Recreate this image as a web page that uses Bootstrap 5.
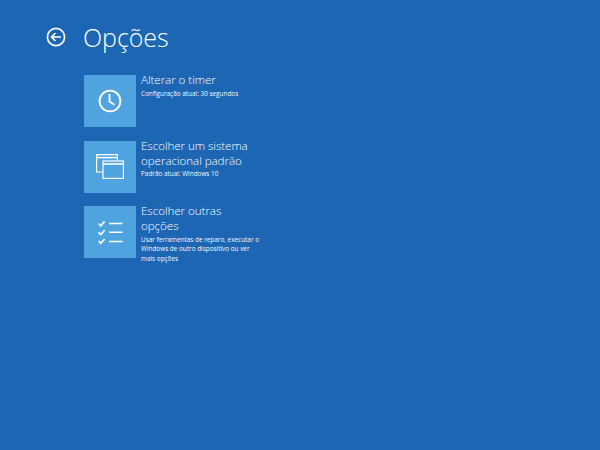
<!DOCTYPE html>
<html lang="pt">
<head>
<meta charset="utf-8">
<link href="https://cdn.jsdelivr.net/npm/bootstrap@5.3.0/dist/css/bootstrap.min.css" rel="stylesheet">
<style>
html,body{height:100%;margin:0}
body{background:#1c66b3;color:#fff;font-family:"Open Sans","Noto Sans",sans-serif;overflow:hidden}
.screen-wrap{padding:21px 0 0 46px}
.head-row{gap:18px;height:32px;margin-bottom:22px}
.back-btn{width:20px;height:20px;padding:0;background:none;border:0;line-height:0}
.page-title{font-size:25px;font-weight:300;line-height:32px;margin:0 0 0 -1px;letter-spacing:-.05px;color:#fff}
.opts{margin-left:38px;gap:13.5px;width:220px}
.opt-tile{width:52px;height:52px;background:#4fa3df;flex:none}
.opt-text{margin-left:5px;width:122px;margin-top:-3px}
.opt-name{font-size:11.6px;line-height:15px;font-weight:300;letter-spacing:-.05px;color:#fff}
.opt-sub{font-size:6.4px;line-height:9.7px;margin-top:1.5px;color:#f4f9fd}
</style>
</head>
<body>
<div class="screen-wrap">
  <div class="d-flex align-items-center head-row">
    <button class="back-btn" aria-label="Voltar">
      <svg width="20" height="20" viewBox="0 0 20 20" fill="none" stroke="#fff" stroke-width="1.7"><circle cx="10" cy="10" r="8.6"/><path d="M15 10H5.5M9.5 6L5.5 10l4 4"/></svg>
    </button>
    <h1 class="page-title">Opções</h1>
  </div>
  <div class="d-flex flex-column opts">
    <div class="d-flex">
      <div class="opt-tile d-flex align-items-center justify-content-center">
        <svg width="24" height="24" viewBox="0 0 24 24" fill="none" stroke="#fff" stroke-width="1.9"><circle cx="12" cy="12" r="10.4"/><path d="M11.5 5v7.6l5 3.2"/></svg>
      </div>
      <div class="opt-text">
        <div class="opt-name">Alterar o timer</div>
        <div class="opt-sub">Configuração atual: 30 segundos</div>
      </div>
    </div>
    <div class="d-flex">
      <div class="opt-tile d-flex align-items-center justify-content-center">
        <svg width="28" height="25" viewBox="0 0 28 25" fill="none" stroke="#fff" stroke-width="1.2"><path d="M7 18H.6V.6h20.8V7"/><path d="M.6 3.6h20.8" stroke-width="1.6"/><rect x="7" y="7" width="20.4" height="17.4"/><path d="M7 10h20.4" stroke-width="1.6"/></svg>
      </div>
      <div class="opt-text">
        <div class="opt-name">Escolher um sistema<br>operacional padrão</div>
        <div class="opt-sub">Padrão atual: Windows 10</div>
      </div>
    </div>
    <div class="d-flex">
      <div class="opt-tile d-flex align-items-center justify-content-center">
        <svg width="25" height="25" viewBox="0 0 25 25" fill="none" stroke="#fff"><path d="M.6 3.6l2.2 2.2L6.6 1.4M.6 12.3l2.2 2.2 3.8-4.2M.6 21l2.2 2.2 3.8-4.2" stroke-width="1.7"/><path d="M11 3.6h13.5M11 12.3h13.5M11 21.4h13.5" stroke-width="1.5"/></svg>
      </div>
      <div class="opt-text">
        <div class="opt-name">Escolher outras<br>opções</div>
        <div class="opt-sub">Usar ferramentas de reparo, executar o<br>Windows de outro dispositivo ou ver<br>mais opções</div>
      </div>
    </div>
  </div>
</div>
<script src="https://cdn.jsdelivr.net/npm/bootstrap@5.3.0/dist/js/bootstrap.bundle.min.js"></script>
</body>
</html>
